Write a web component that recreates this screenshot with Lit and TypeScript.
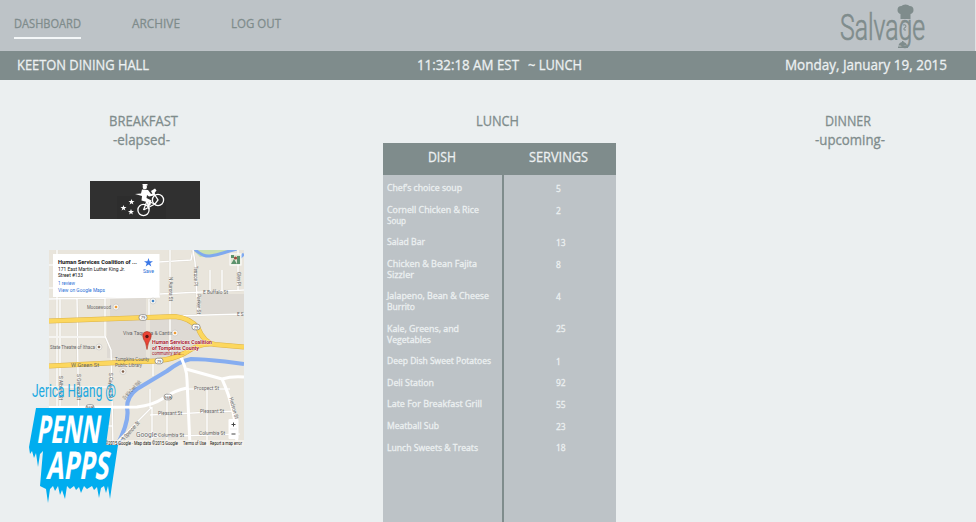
import { LitElement, html, svg, css } from 'lit';
import { customElement, property } from 'lit/decorators.js';

interface Dish {
  lines: [string, number][];
  servings: number;
}

const dishes: Dish[] = [
  { lines: [['Chef’s choice soup', 75]], servings: 5 },
  { lines: [['Cornell Chicken & Rice', 92], ['Soup', 19]], servings: 2 },
  { lines: [['Salad Bar', 38]], servings: 13 },
  { lines: [['Chicken & Bean Fajita', 90], ['Sizzler', 27]], servings: 8 },
  { lines: [['Jalapeno, Bean & Cheese', 102], ['Burrito', 28]], servings: 4 },
  { lines: [['Kale, Greens, and', 72], ['Vegetables', 44]], servings: 25 },
  { lines: [['Deep Dish Sweet Potatoes', 104]], servings: 1 },
  { lines: [['Deli Station', 47]], servings: 92 },
  { lines: [['Late For Breakfast Grill', 95]], servings: 55 },
  { lines: [['Meatball Sub', 52]], servings: 23 },
  { lines: [['Lunch Sweets & Treats', 91]], servings: 18 },
];

// One line of text squeezed to a fixed width
@customElement('fit-text')
export class FitText extends LitElement {
  @property({ type: String }) text = '';
  @property({ type: Number }) width = 0;
  @property({ type: Number }) size = 14.5;
  @property({ type: Number }) line = 19;

  static styles = css`
    :host {
      display: block;
      flex: none;
    }

    svg {
      display: block;
      overflow: visible;
      margin: var(--fit-margin, 0 auto);
    }

    text {
      fill: currentColor;
      stroke: currentColor;
      stroke-width: 0.3px;
      font-family: 'Open Sans', 'Noto Sans', sans-serif;
      white-space: pre;
    }
  `;

  render() {
    return html`
      <svg width=${this.width} height=${this.line}>
        <text x="0" y=${this.line / 2 + this.size * 0.325} font-size=${this.size}
          textLength=${this.width} lengthAdjust="spacingAndGlyphs">${this.text}</text>
      </svg>
    `;
  }
}

@customElement('salvage-logo')
export class SalvageLogo extends LitElement {
  static styles = css`
    :host {
      display: block;
      color: #7f8c8c;
    }

    svg {
      display: block;
    }

    text {
      font-family: Roboto, sans-serif;
      font-size: 37px;
      font-weight: 300;
      fill: currentColor;
      stroke: currentColor;
      stroke-width: 0.7px;
    }
  `;

  render() {
    return html`
      <svg width="90" height="51" viewBox="838 0 90 51">
        <text x="840" y="40" textLength="85" lengthAdjust="spacingAndGlyphs">Salvage</text>
        <g fill="currentColor">
          <path d="M900.500 19V14q-3-1-3-4 0-4 4-4 1-1.500 4-1.500t4 1.500q4 0 4 4 0 3-3 4v5z" />
          <path d="M898 46.500h10v1.500h-10zM898.500 45.500q.5-3 3.500-3.500v-1h1.500v1q3 .5 3.500 3.500z" />
        </g>
        <path d="M903 25q3-1 3 1t-2 2v2h2" fill="none" stroke="currentColor" />
      </svg>
    `;
  }
}

@customElement('courier-badge')
export class CourierBadge extends LitElement {
  static styles = css`
    :host {
      display: block;
      width: 110px;
      height: 38px;
      background: #303030;
    }

    svg {
      display: block;
    }
  `;

  render() {
    const star = 'M0-3L.8-1 3-1 1.200.4 1.900 2.600 0 1.300-1.900 2.600-1.200.4-3-1-.8-1z';
    return html`
      <svg width="110" height="38" viewBox="90 181 110 38">
        <rect x="117" y="196" width="49" height="23" fill="#2d2d2d" />
        <g fill="none" stroke="#fff" stroke-width="1.300">
          <circle cx="143.500" cy="210" r="5.600" />
          <circle cx="158" cy="200" r="5.600" />
          <path d="M143.500 210L147 201L155 204L158 200L153 192M143.500 210L155 204M147 201L149 209" />
        </g>
        <g fill="#fff">
          <circle cx="144.800" cy="187" r="2.200" />
          <path d="M142.500 184h5v1.500h-5zM142 189.500l6 .5 3 4 4-1-1 2.500-5 1-2-1.500-.5 3 5 2.500-1 4.500-2.500 2-.5-1.500 1-3-7-2 .5-4.500-7-2 6-.5z" />
          <path d="M151 191l4-2.500 1.500 2-3.500 4.500z" />
          <path d=${star} transform="translate(131.500 202)" />
          <path d=${star} transform="translate(123.500 208)" />
          <path d=${star} transform="translate(131 212)" />
        </g>
      </svg>
    `;
  }
}

// x, y, width, text, rotation
type Label = [number, number, number, string, number?];

const streets: Label[] = [
  [87, 309, 24, 'Moosewood'],
  [123, 335, 53, 'Viva Taqueria & Cantina'],
  [50, 349, 45, 'State Theatre of Ithaca'],
  [203, 294, 25, 'E Buffalo St'],
  [71, 367, 28, 'W Green St'],
  [115, 361, 34, 'Tompkins County'],
  [115, 367, 27, 'Public Library'],
  [194, 390, 25, 'Prospect St'],
  [158, 415, 24, 'Pleasant St'],
  [200, 413, 24, 'Pleasant St'],
  [158, 437, 26, 'Columbia St'],
  [199, 435, 26, 'Columbia St'],
  [237, 316, 6.5, 'E S'],
  [168.5, 277, 24, 'N Aurora St', 90],
  [193.5, 266, 20, 'Terrace Pl', 90],
  [197, 294, 20, 'Parker St', 90],
  [236.5, 272, 14, 'Glen Pl', 90],
  [58.5, 376, 24, 'S Albany St', 90],
  [76.5, 374, 26, 'S Geneva St', 90],
  [109, 373, 25, 'S Cayuga St', 90],
  [229, 398, 22, 'Hudson St', 74],
  [124, 441, 24, 'S Spencer St', -48],
  [125, 400, 24, 'Six Mile Creek Walk', -47],
];

const minorRoads = [
  'M49 265H54M49 299L160 297M49 288H54M159 262L191 260L193 250M57 250V446M60 298V446M77 298L79 446M105 298V336L111 350L113 446',
  'M160 294L244 290M170 250V355M193 250L195 262L198 315M210 270V291M222 270V291M238 250V290M171 316L244 314',
  'M49 337H105M49 387H112M79 426H112M153 363V376M149 299V318M150 389V408M188 389H230M150 415L236 411M150 437L240 434M113 446L152 407M152 407V446M167 398V446M207 389V446',
];

@customElement('area-map')
export class AreaMap extends LitElement {
  static styles = css`
    :host {
      display: block;
      width: 195px;
      height: 196px;
    }

    svg {
      display: block;
      font-family: Roboto, 'Open Sans', sans-serif;
      font-size: 5.6px;
    }

    .street {
      fill: #666;
    }

    .dark {
      fill: #111;
    }

    .link {
      fill: #2a6fd6;
    }

    .place {
      fill: #a5152c;
    }
  `;

  private _text(x: number, y: number, w: number, text: string, rot = 0, cls = 'street') {
    return svg`<text class=${cls} x=${x} y=${y} textLength=${w} lengthAdjust="spacingAndGlyphs"
      transform="rotate(${rot} ${x} ${y})">${text}</text>`;
  }

  private _poi(x: number, y: number, color: string) {
    return svg`<circle cx=${x} cy=${y} r="3" fill="#f8f6f1" stroke="#bbb" stroke-width=".5" />
      <circle cx=${x} cy=${y} r="1.300" fill=${color} />`;
  }

  private _shield(x: number, y: number, text: string) {
    return svg`<rect x=${x - 4} y=${y - 2.8} width="8" height="5.600" rx="2.500" fill="#fff" stroke="#888" stroke-width=".8" />
      <text x=${x} y=${y + 1.6} text-anchor="middle" font-size="4.200" fill="#444">${text}</text>`;
  }

  render() {
    return html`
      <svg width="195" height="196" viewBox="49 250 195 196">
        <rect x="49" y="250" width="195" height="196" fill="#e9e5dc" />
        <path d="M110 298H146V318H110zM107 320H146V358H107zM171 317H188L210 344 190 350 180 355 150 360V320zM201 294H244V314H201z" fill="#dedad4" />
        <path d="M193 250L200 257 215 255 229 250z" fill="#c9dfaf" />
        <g fill="none" stroke-linejoin="round">
          <path d="M194 249Q203 257 210 256T223 253T237 249M244 254L237 260" stroke="#7fa9ef" stroke-width="3" />
          <path d="M244 364L225 361.500Q203 359 191 359Q180 361 167 371L137 389Q127 396 127 408Q130 420 117 446" stroke="#86adf0" stroke-width="4.200" />
          ${minorRoads.map((d) => svg`<path d=${d} stroke="#d6d1c7" stroke-width="2.200" /><path d=${d} stroke="#fff" stroke-width="1.500" />`)}
          <path d="M49 407.500L137 407Q153 405 162 399Q175 390 187 388M178 352Q187 367 187 380L190 446M186 369L222 379Q232 376 244 377M222 379Q236 409 237 446" stroke="#fff" stroke-width="3" />
          <path d="M49 321L175 316.500Q190 318 198 328Q204 343 215 344.500L244 347M49 366L140 361.500Q169 362 185 353Q199 343 212 344" stroke="#dcb347" stroke-width="5" />
          <path d="M49 321L175 316.500Q190 318 198 328Q204 343 215 344.500L244 347M49 366L140 361.500Q169 362 185 353Q199 343 212 344" stroke="#fcd75e" stroke-width="4" />
        </g>
        ${streets.map(([x, y, w, text, rot]) => this._text(x, y, w, text, rot))}
        ${this._poi(116, 307, '#ee9b35')}
        ${this._poi(99, 347, '#886b55')}
        ${this._poi(175, 333, '#ee9b35')}
        ${this._poi(153, 301, '#4285c8')}
        ${this._poi(123, 371.5, '#80604b')}
        ${this._shield(143, 317.5, '79')}
        ${this._shield(196, 327, '79')}
        ${this._shield(159, 361, '79')}
        ${this._shield(168, 397, '96B')}
        ${this._shield(90, 407.5, '96B')}
        <g font-weight="bold" stroke="#fff" stroke-width=".6" paint-order="stroke">
          ${this._text(152, 344, 60, 'Human Services Coalition', 0, 'place')}
          ${this._text(152, 350, 47, 'of Tompkins County', 0, 'place')}
        </g>
        ${this._text(152, 355, 32, 'community arts...', 0, 'place')}
        <path d="M147 349.500Q146 342 143.500 339Q141 332 147 331.500Q153 332 150.500 339Q148 342 147 349.500z" fill="#ea4335" stroke="#a52714" stroke-width=".6" />
        <circle cx="147" cy="336.500" r="1.700" fill="#591512" />

        <rect x="53" y="254" width="106.500" height="43" fill="#fff" />
        <g font-weight="bold" font-size="6">${this._text(58, 263.5, 79, 'Human Services Coalition of ...', 0, 'dark')}</g>
        ${this._text(58, 271, 67, '171 East Martin Luther King Jr.', 0, 'dark')}
        ${this._text(58, 277, 25, 'Street #133', 0, 'dark')}
        ${this._text(58, 284.5, 17, '1 review', 0, 'link')}
        ${this._text(58, 292, 47, 'View on Google Maps', 0, 'link')}
        ${this._text(143, 273, 11, 'Save', 0, 'link')}
        <path d="M148.500 258L149.600 261.200H153L150.300 263.200 151.300 266.500 148.500 264.500 145.700 266.500 146.700 263.200 144 261.200H147.400z" fill="#3b78e7" />

        <rect x="230" y="254" width="11" height="11" fill="#e2e6d5" stroke="#fff" />
        <path d="M231 255h3v3h-3zM231 264l3-5 3 5zM237 256h3v8h-3z" fill="#5c926c" />
        <circle cx="235.500" cy="258" r="1.600" fill="#a04b3d" />
        <rect x="228.500" y="419" width="10" height="20" rx="1" fill="#fff" />
        <path d="M231.500 424.500h4M233.500 422.500v4M231.500 434h4" stroke="#444" stroke-width="1" />
        <path d="M230 429h7" stroke="#ddd" stroke-width=".6" />
        <g font-size="8" stroke="#fff" stroke-width=".8" paint-order="stroke">${this._text(136, 437, 21, 'Google')}</g>
        <rect x="105" y="440" width="139" height="6" fill="#f5f3ef" opacity=".75" />
        ${this._text(105, 444.5, 73, '©2015 Google · Map data ©2015 Google', 0, 'dark')}
        ${this._text(183, 444.5, 23, 'Terms of Use', 0, 'dark')}
        ${this._text(210, 444.5, 32, 'Report a map error', 0, 'dark')}
      </svg>
    `;
  }
}

@customElement('penn-apps')
export class PennApps extends LitElement {
  static styles = css`
    :host {
      display: block;
    }

    svg {
      display: block;
      overflow: visible;
      font-family: 'Open Sans', sans-serif;
    }
  `;

  render() {
    return html`
      <svg width="94" height="126" viewBox="26 378 94 126">
        <text x="32" y="397" font-family="Roboto" font-size="18" textLength="84" lengthAdjust="spacingAndGlyphs" fill="#20a9e1">Jerica Huang @</text>
        <path fill="#00adef" d="M36 408H111L106 445H118L112 485 110 499 108 486 106 493 104 486 101 488 99 498 97 487 94 490 92 486 87 489 84 486 81 493 79 487 76 490 74 486 70 489 67 486 65 499 62 490 60 495 58 486 55 491 53 486 50 489 48 503 46 489 40 486 43 451 40 454 38 467 36 453 34 458 32 451 30 454 29 447z" />
        <g fill="#fff" stroke="#fff" stroke-width=".2" font-weight="bold" font-size="38">
          <text transform="matrix(1 0 -.16 1 36 443)" textLength="63" lengthAdjust="spacingAndGlyphs">PENN</text>
          <text transform="matrix(1 0 -.16 1 46 479)" textLength="62" lengthAdjust="spacingAndGlyphs">APPS</text>
        </g>
      </svg>
    `;
  }
}

@customElement('app-root')
export class AppRoot extends LitElement {
  static styles = css`
    :host {
      display: block;
      height: 522px;
      overflow: hidden;
      background: #ebeff0;
      color: #7f8c8c;
    }

    nav {
      display: flex;
      justify-content: space-between;
      height: 51px;
      padding: 0 47px 0 14px;
      box-sizing: border-box;
      border-right: 1px solid #dfe3e5;
      background: #bdc3c7;
    }

    .links {
      display: flex;
      align-items: flex-start;
      gap: 51px;
      padding-top: 15px;
    }

    .link {
      padding-bottom: 4px;
    }

    .link.active {
      border-bottom: 2px solid #f4f7f8;
    }

    .status {
      display: grid;
      grid-template-columns: 400px 165px 1fr;
      align-items: center;
      height: 29px;
      padding: 0 29px 1px 17px;
      box-sizing: border-box;
      background: #7f8c8c;
      color: #ecf0f1;
    }

    .clock {
      display: flex;
      gap: 9px;
    }

    .status > :first-child {
      justify-self: start;
    }

    .status > :last-child {
      justify-self: end;
    }

    main {
      display: grid;
      grid-template-columns: 383px 233px 1fr;
      height: 442px;
    }

    .meal {
      display: flex;
      flex-direction: column;
      align-items: center;
      padding-top: 32px;
    }

    .breakfast {
      position: relative;
      padding-right: 97px;
    }

    .elapsed,
    .lunch {
      padding-right: 4px;
    }

    .dinner {
      padding-left: 108px;
    }

    .dinner fit-text:first-child {
      padding-right: 4px;
    }

    courier-badge {
      margin: 31px 0 31px 4px;
    }

    area-map {
      margin-left: 7px;
    }

    penn-apps {
      position: absolute;
      left: 26px;
      top: 298px;
    }

    .table {
      flex: 1;
      align-self: stretch;
      display: flex;
      flex-direction: column;
      margin-top: 12px;
      background: linear-gradient(#7f8c8c, #7f8c8c) 119px 0 / 2px 100% no-repeat #bdc3c7;
      color: #ecf0f1;
    }

    .head {
      display: grid;
      grid-template-columns: 117px 117px;
      height: 32px;
      padding-bottom: 3px;
      box-sizing: border-box;
      align-items: center;
      background: #7f8c8c;
    }

    .rows {
      display: flex;
      flex-direction: column;
      gap: 10.8px;
      padding: 8.4px 0 0 4px;
      --fit-margin: 0;
    }

    .row {
      display: grid;
      grid-template-columns: 169px 1fr;
      justify-items: start;
    }

    .servings {
      margin: 0.6px 0 -0.6px;
    }
  `;

  render() {
    return html`
      <nav>
        <div class="links">
          <div class="link active"><fit-text text="DASHBOARD" width="67" size="13" line="18"></fit-text></div>
          <div class="link"><fit-text text="ARCHIVE" width="48" size="13" line="18"></fit-text></div>
          <div class="link"><fit-text text="LOG OUT" width="50" size="13" line="18"></fit-text></div>
        </div>
        <salvage-logo></salvage-logo>
      </nav>
      <div class="status">
        <fit-text text="KEETON DINING HALL" width="132"></fit-text>
        <div class="clock">
          <fit-text text="11:32:18 AM EST" width="102"></fit-text>
          <fit-text text="~ LUNCH" width="54"></fit-text>
        </div>
        <fit-text text="Monday, January 19, 2015" width="162"></fit-text>
      </div>
      <main>
        <section class="meal breakfast">
          <fit-text text="BREAKFAST" width="69"></fit-text>
          <fit-text class="elapsed" text="-elapsed-" width="57"></fit-text>
          <courier-badge></courier-badge>
          <area-map></area-map>
          <penn-apps></penn-apps>
        </section>
        <section class="meal">
          <fit-text class="lunch" text="LUNCH" width="43"></fit-text>
          <div class="table">
            <div class="head">
              <fit-text text="DISH" width="28"></fit-text>
              <fit-text text="SERVINGS" width="59"></fit-text>
            </div>
            <div class="rows">
              ${dishes.map(
                (dish) => html`
                  <div class="row">
                    <div>
                      ${dish.lines.map(
                        ([text, width]) => html`<fit-text text=${text} width=${width} size="8.8" line="10.8"></fit-text>`
                      )}
                    </div>
                    <fit-text class="servings" text=${dish.servings} width=${String(dish.servings).length * 4.8}
                      size="8.8" line="10.8"></fit-text>
                  </div>
                `
              )}
            </div>
          </div>
        </section>
        <section class="meal dinner">
          <fit-text text="DINNER" width="46"></fit-text>
          <fit-text text="-upcoming-" width="70"></fit-text>
        </section>
      </main>
    `;
  }
}
